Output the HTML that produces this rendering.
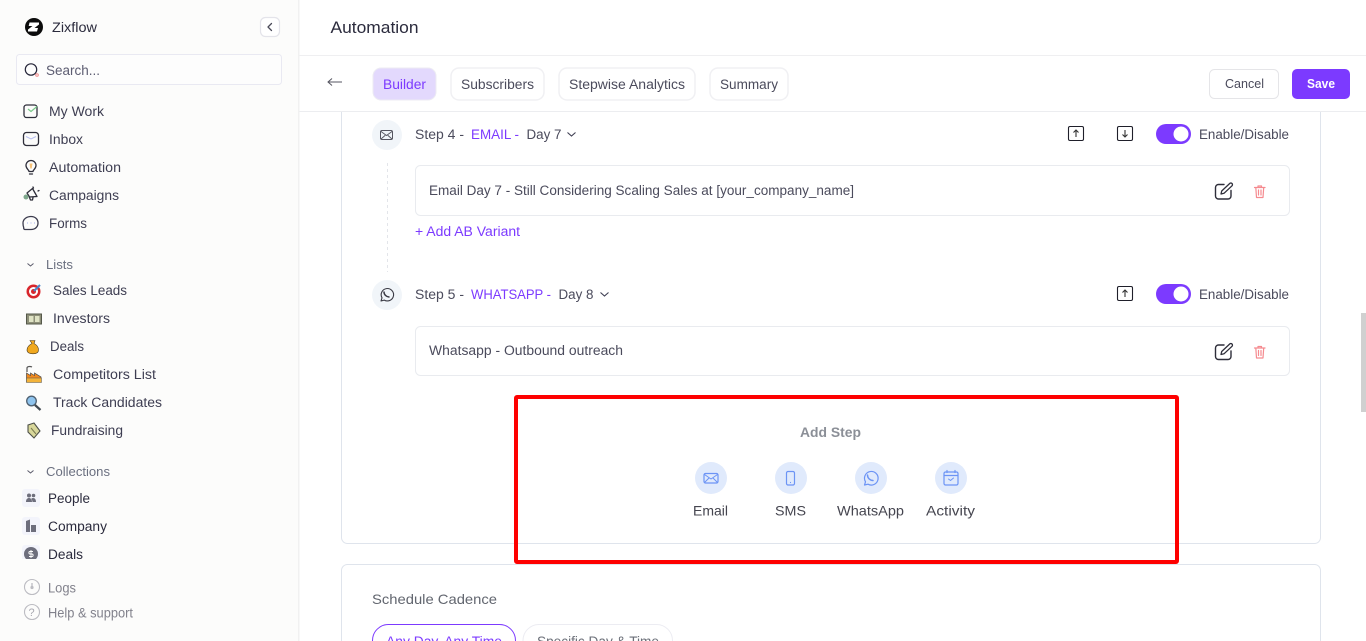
<!DOCTYPE html>
<html lang="en"><head><meta charset="utf-8"><title>Automation</title>
<style>
html,body{margin:0;padding:0;width:1366px;height:641px;overflow:hidden;background:#fff}
svg{display:block}
text{font-family:"Liberation Sans",sans-serif;font-size:13.5px;fill:#4b4b5c}
.n{fill:#3e3e52}.d{fill:#2b2b3d}.g{fill:#6b7080;font-size:12.5px}.p{fill:#7c3aff}
.ic{fill:none;stroke:#2e2e3a;stroke-width:1.3;stroke-linecap:round;stroke-linejoin:round}
.bl{fill:none;stroke:#6c94f5;stroke-width:1.2;stroke-linecap:round;stroke-linejoin:round}
.tr{fill:none;stroke:#f58a8f;stroke-width:1.2;stroke-linecap:round;stroke-linejoin:round}
</style></head><body>
<svg width="1366" height="641" viewBox="0 0 1366 641" xmlns="http://www.w3.org/2000/svg">
<defs><clipPath id="c"><rect x="0" y="480" width="298" height="79"/></clipPath></defs>
<rect width="1366" height="641" fill="#fff"/>
<!-- sidebar -->
<rect x="0" y="0" width="298" height="641" fill="#fcfcfb"/>
<rect x="298" y="0" width="1.5" height="641" fill="#f1f1f1"/>
<circle cx="34" cy="27" r="9" fill="#0c0c0c"/>
<path d="M29.500 22.500h9.500v2l-4.500 3.500h3.500l-1 3.500h-9v-2l4.500-3.500h-3.800z" fill="#fff"/>
<text x="52" y="32" class="d" textLength="45" lengthAdjust="spacingAndGlyphs">Zixflow</text>
<rect x="260.500" y="17.500" width="19" height="19" rx="5" fill="#fff" stroke="#e4e4ea" stroke-width="1.200"/>
<path d="M271.500 23.500l-3.500 3.500 3.500 3.500" fill="none" stroke="#4a4a58" stroke-width="1.300" stroke-linecap="round" stroke-linejoin="round"/>
<rect x="16.500" y="54.500" width="265" height="30" rx="3" fill="#fdfdfd" stroke="#e9e9f2"/>
<circle cx="31" cy="69.500" r="5.700" fill="none" stroke="#26263a" stroke-width="1.200"/>
<circle cx="37" cy="75" r="1.300" fill="none" stroke="#f08a8a"/>
<text x="46" y="75" style="fill:#5d5d72" textLength="54" lengthAdjust="spacingAndGlyphs">Search...</text>

<rect x="24" y="105" width="13" height="12.500" rx="2.500" class="ic"/>
<path d="M28 109l3 2.500 6-5" fill="none" stroke="#78c888" stroke-width="1.200"/>
<text x="49" y="116" class="n" textLength="55" lengthAdjust="spacingAndGlyphs">My Work</text>
<rect x="23.500" y="132.500" width="15" height="13" rx="3" class="ic"/>
<path d="M26 136.500l5 2.500 5-2.500" fill="none" stroke="#b8bff0" stroke-width="1"/>
<text x="49" y="144" class="n" textLength="34" lengthAdjust="spacingAndGlyphs">Inbox</text>
<path d="M29 171.500c0-2-3-2.500-3-6a5 5 0 0 1 10 0c0 3.500-3 4-3 6zM29.500 174h3" class="ic"/>
<path d="M29.500 163.500h3l-.8 5h-1.400z" fill="#f6c177"/>
<text x="49" y="172" class="n" textLength="72" lengthAdjust="spacingAndGlyphs">Automation</text>
<path d="M27 193l5.500-4.500 4.500 8-7.500.5zM29.500 197.500l1 2.500h2l.5-2.500M33 187l.5 1M38 191l1-.5" class="ic"/>
<circle cx="26" cy="197" r="2.500" fill="#7fa88c"/>
<text x="49" y="200" class="n" textLength="70" lengthAdjust="spacingAndGlyphs">Campaigns</text>
<path d="M31 216.500c4 0 7 2.500 7 6.500s-3 6.500-7 6.500h-6c-1 0-1.500-1-1.300-2-.4-1-.7-3-.7-4.500 0-4 4-6.500 8-6.500z" class="ic" style="stroke:#3b3b4d"/>
<path d="M27 223h1M30.500 223h1M34 223h1" stroke="#b8bff0" stroke-width="1.200"/>
<text x="49" y="228" class="n" textLength="38" lengthAdjust="spacingAndGlyphs">Forms</text>

<path d="M27.500 263.500l3 2.500 3-2.500" fill="none" stroke="#5a5a6a" stroke-width="1"/>
<text x="46" y="269" class="g" textLength="27" lengthAdjust="spacingAndGlyphs">Lists</text>
<circle cx="33.500" cy="291.500" r="7" fill="#d8262c"/><circle cx="33.500" cy="291.500" r="4.500" fill="#fff"/><circle cx="33.500" cy="291.500" r="2.500" fill="#d8262c"/>
<path d="M34 291l6-6" stroke="#4a86c8" stroke-width="2"/>
<text x="53" y="295" class="n" textLength="74" lengthAdjust="spacingAndGlyphs">Sales Leads</text>
<rect x="26.500" y="314" width="15" height="10" fill="#8d8f78" stroke="#55584a"/>
<rect x="29" y="316" width="4.500" height="6" fill="#dfe3c4"/><rect x="35" y="316" width="4.500" height="6" fill="#dfe3c4"/>
<text x="53" y="323" class="n" textLength="57" lengthAdjust="spacingAndGlyphs">Investors</text>
<path d="M30 340.500h5l-1 3c3 1.500 4.500 4 4.500 6.500 0 2.500-2 3.800-5.500 3.800s-6-1.300-6-3.800c0-2.500 2-5 5-6.500z" fill="#f0a81e" stroke="#4a3a20" stroke-width=".6"/>
<text x="50" y="351" class="n" textLength="34" lengthAdjust="spacingAndGlyphs">Deals</text>
<path d="M26.500 382v-9l4 2.500v-2.500l4 2.500v-2.500l6.500 4v5z" fill="#f28a1e" stroke="#4a4a4a" stroke-width=".7"/>
<path d="M27 372v-4c0-1.500 3-2 5-1" fill="none" stroke="#555" stroke-width="1.200"/>
<rect x="26.500" y="378" width="15" height="4.500" fill="#f3b33a" stroke="#555" stroke-width=".5"/>
<text x="53" y="379" class="n" textLength="103" lengthAdjust="spacingAndGlyphs">Competitors List</text>
<circle cx="31.500" cy="401" r="4.800" fill="#8fc4ee" stroke="#4f6070" stroke-width="1.300"/>
<path d="M35 405l5.500 5" stroke="#404850" stroke-width="2.200"/>
<text x="53" y="407" class="n" textLength="109" lengthAdjust="spacingAndGlyphs">Track Candidates</text>
<path d="M28 425l6-2 6 8-6 7-6-6z" fill="#d8d79a" stroke="#4d5048" stroke-width="1.100"/>
<path d="M31 428l5 6" stroke="#7a7c50"/>
<text x="51" y="435" class="n" textLength="72" lengthAdjust="spacingAndGlyphs">Fundraising</text>

<path d="M27.500 470.500l3 2.500 3-2.500" fill="none" stroke="#5a5a6a" stroke-width="1"/>
<text x="46" y="476" class="g" textLength="64" lengthAdjust="spacingAndGlyphs">Collections</text>
<g clip-path="url(#c)">
<rect x="22" y="489" width="18" height="18" rx="3" fill="#f3f4fb"/>
<circle cx="29" cy="495.500" r="2" fill="#6d6e7c"/><circle cx="33.500" cy="495.500" r="1.800" fill="#6d6e7c"/>
<path d="M26 502c0-3 1.500-4 3-4s3 1 3 4zM32.500 502h3.500c0-2.500-1-4-2.800-4-1 0-1.500.3-1.900.7.700 1 1.100 2 1.200 3.300z" fill="#6d6e7c"/>
<text x="48" y="503" class="d" textLength="42" lengthAdjust="spacingAndGlyphs">People</text>
<rect x="22" y="517" width="18" height="18" rx="3" fill="#f3f4fb"/>
<path d="M26 532v-11l4-1.500v12.500zM31 532v-7h5v7z" fill="#6d6e7c"/>
<text x="48" y="531" class="d" textLength="59" lengthAdjust="spacingAndGlyphs">Company</text>
<rect x="22" y="545" width="18" height="18" rx="3" fill="#f3f4fb"/>
<circle cx="31" cy="554" r="7" fill="#6d6e7c"/>
<path d="M33 551.500h-3c-1.500 0-1.500 2.500 0 2.500h2c1.500 0 1.500 2.500 0 2.500h-3M31 550v8" fill="none" stroke="#fff" stroke-width=".9"/>
<text x="48" y="559" class="d" textLength="35" lengthAdjust="spacingAndGlyphs">Deals</text>
</g>
<circle cx="32" cy="587" r="7.500" fill="none" stroke="#bcbcc2" stroke-width="1.100"/>
<path d="M32 583v4" stroke="#bcbcc2" stroke-width="1.300"/><circle cx="32" cy="587.500" r="1.600" fill="#bcbcc2"/>
<text x="48" y="592.500" style="fill:#82828c" textLength="28" lengthAdjust="spacingAndGlyphs">Logs</text>
<circle cx="32" cy="612" r="7.500" fill="none" stroke="#bcbcc2" stroke-width="1.100"/>
<text x="28.500" y="616" style="fill:#a8a8b0;font-size:11px">?</text>
<text x="48" y="617.500" style="fill:#82828c" textLength="85" lengthAdjust="spacingAndGlyphs">Help &amp; support</text>

<!-- cards -->
<rect x="341.500" y="100" width="979" height="443.500" rx="6" fill="#fff" stroke="#dfe4ec"/>
<rect x="341.500" y="564.500" width="979" height="100" rx="6" fill="#fff" stroke="#dfe4ec"/>
<!-- header -->
<rect x="299.500" y="0" width="1066.500" height="111" fill="#fff"/>
<rect x="299.500" y="55" width="1066.500" height="1" fill="#efeff1"/>
<rect x="299.500" y="111" width="1066.500" height="1" fill="#ecedf0"/>
<text x="330.500" y="33" class="d" style="font-size:16.500px" textLength="88" lengthAdjust="spacingAndGlyphs">Automation</text>
<path d="M342 82h-14M332 78.500l-4 3.500 4 3.500" fill="none" stroke="#555560" stroke-width="1"/>

<rect x="373" y="68" width="63" height="32" rx="8" fill="#e3d9fd" stroke="#ecebf3"/>
<text x="383" y="89" class="p" textLength="43" lengthAdjust="spacingAndGlyphs">Builder</text>
<rect x="451" y="68" width="93" height="32" rx="8" fill="#fff" stroke="#f0f0f3" stroke-width="1.500"/>
<text x="461" y="89" textLength="73" lengthAdjust="spacingAndGlyphs">Subscribers</text>
<rect x="559" y="68" width="136" height="32" rx="8" fill="#fff" stroke="#f0f0f3" stroke-width="1.500"/>
<text x="569" y="89" textLength="116" lengthAdjust="spacingAndGlyphs">Stepwise Analytics</text>
<rect x="710" y="68" width="78" height="32" rx="8" fill="#fff" stroke="#f0f0f3" stroke-width="1.500"/>
<text x="720" y="89" textLength="58" lengthAdjust="spacingAndGlyphs">Summary</text>
<rect x="1209.500" y="69.500" width="69" height="29" rx="5" fill="#fff" stroke="#e5e5e8"/>
<text x="1225" y="88" style="font-size:12.500px" textLength="39" lengthAdjust="spacingAndGlyphs">Cancel</text>
<rect x="1292" y="69" width="58" height="30" rx="5" fill="#7c3aff"/>
<text x="1307" y="88" style="font-size:12.500px;fill:#fff;font-weight:700" textLength="28" lengthAdjust="spacingAndGlyphs">Save</text>

<!-- step 4 -->
<circle cx="387" cy="135" r="15" fill="#f1f5f9"/>
<rect x="380.500" y="130.500" width="12" height="9" rx="1.500" class="ic" style="stroke-width:1;stroke:#55555f"/>
<path d="M381 131.500l5.500 4 5.500-4M381 139l4-3.500M392 139l-4-3.500" class="ic" style="stroke-width:.9;stroke:#55555f"/>
<text x="415" y="139" textLength="49" lengthAdjust="spacingAndGlyphs">Step 4 -</text>
<text x="471" y="139" class="p" textLength="48" lengthAdjust="spacingAndGlyphs">EMAIL -</text>
<text x="526.500" y="139" textLength="35" lengthAdjust="spacingAndGlyphs">Day 7</text>
<path d="M567.500 132.500l4 3.500 4-3.500" fill="none" stroke="#3e3e52" stroke-width="1.100"/>
<path d="M387.500 163v109" stroke="#e3e5ea" stroke-dasharray="3 3"/>
<rect x="415.500" y="165.500" width="874" height="50" rx="5" fill="#fff" stroke="#e9ebef"/>
<text x="429" y="195" textLength="425" lengthAdjust="spacingAndGlyphs">Email Day 7 - Still Considering Scaling Sales at [your_company_name]</text>
<text x="415" y="236" class="p" style="font-weight:500" textLength="105" lengthAdjust="spacingAndGlyphs">+ Add AB Variant</text>
<rect x="1068.500" y="126.500" width="15" height="14" rx="1.500" fill="none" stroke="#1f1f2a" stroke-width="1.100"/>
<path d="M1076 137v-6.500M1073.500 132.500l2.500-2.500 2.500 2.500" fill="none" stroke="#333" stroke-width="1.100"/>
<rect x="1117.500" y="126.500" width="15" height="14" rx="1.500" fill="none" stroke="#1f1f2a" stroke-width="1.100"/>
<path d="M1125 130v6.500M1122.500 134.500l2.500 2.500 2.500-2.500" fill="none" stroke="#333" stroke-width="1.100"/>
<rect x="1156" y="124" width="35" height="20" rx="10" fill="#7c3aff"/><circle cx="1181" cy="134" r="7.500" fill="#fff"/>
<text x="1199" y="139" textLength="90" lengthAdjust="spacingAndGlyphs">Enable/Disable</text>
<path d="M1224 184.500h-5.500a3 3 0 0 0-3 3v8.500a3 3 0 0 0 3 3h9.500a3 3 0 0 0 3-3v-5.500" class="ic" style="stroke-width:1.400"/>
<path d="M1221 194l.7-3 8-7.500a1.400 1.400 0 0 1 2.300 2.300l-8 7.500z" class="ic" style="stroke-width:1.300"/>
<path d="M1254.500 187.500h10.500M1258 187.500v-1.500h3.500v1.500M1255.800 187.500l.7 10h6.500l.7-10M1258.500 190v5M1261 190v5" class="tr"/>

<!-- step 5 -->
<circle cx="387" cy="295" r="15" fill="#f1f5f9"/>
<path d="M381 301l1-3.200a6.200 6.200 0 1 1 2.300 2.300z" class="ic" style="stroke-width:1.100;stroke:#3a3a44"/>
<path d="M384 292c0 2.600 2.200 4.800 5 5" class="ic" style="stroke-width:1.500;stroke:#3a3a44"/>
<text x="415" y="299" textLength="49" lengthAdjust="spacingAndGlyphs">Step 5 -</text>
<text x="471" y="299" class="p" textLength="80" lengthAdjust="spacingAndGlyphs">WHATSAPP -</text>
<text x="558.500" y="299" textLength="35" lengthAdjust="spacingAndGlyphs">Day 8</text>
<path d="M600.500 292.500l4 3.500 4-3.500" fill="none" stroke="#3e3e52" stroke-width="1.100"/>
<rect x="415.500" y="326.500" width="874" height="49" rx="5" fill="#fff" stroke="#e9ebef"/>
<text x="429" y="355" textLength="194" lengthAdjust="spacingAndGlyphs">Whatsapp - Outbound outreach</text>
<rect x="1117.500" y="286.500" width="15" height="14" rx="1.500" fill="none" stroke="#1f1f2a" stroke-width="1.100"/>
<path d="M1125 297v-6.500M1122.500 292.500l2.500-2.500 2.500 2.500" fill="none" stroke="#333" stroke-width="1.100"/>
<rect x="1156" y="284" width="35" height="20" rx="10" fill="#7c3aff"/><circle cx="1181" cy="294" r="7.500" fill="#fff"/>
<text x="1199" y="299" textLength="90" lengthAdjust="spacingAndGlyphs">Enable/Disable</text>
<g transform="translate(0,160.500)">
<path d="M1224 184.500h-5.500a3 3 0 0 0-3 3v8.500a3 3 0 0 0 3 3h9.500a3 3 0 0 0 3-3v-5.500" class="ic" style="stroke-width:1.400"/>
<path d="M1221 194l.7-3 8-7.500a1.400 1.400 0 0 1 2.300 2.300l-8 7.500z" class="ic" style="stroke-width:1.300"/>
<path d="M1254.500 187.500h10.500M1258 187.500v-1.500h3.500v1.500M1255.800 187.500l.7 10h6.500l.7-10M1258.500 190v5M1261 190v5" class="tr"/>
</g>

<!-- add step -->
<text x="800" y="437" style="font-weight:700;fill:#8b8f97;font-size:13.500px" textLength="61" lengthAdjust="spacingAndGlyphs">Add Step</text>
<circle cx="711" cy="478" r="16" fill="#e0eafc"/>
<rect x="704" y="473.500" width="14" height="9.500" rx="1.500" class="bl"/>
<path d="M704.500 474.500l6.500 4.500 6.500-4.500M704.500 482.500l4.500-4.500M717.500 482.500l-4.500-4.500" class="bl" style="stroke-width:1"/>
<circle cx="791" cy="478" r="16" fill="#e0eafc"/>
<rect x="786.500" y="471.500" width="8" height="13.500" rx="1.500" class="bl"/><circle cx="790.500" cy="482.500" r=".6" fill="#6c94f5"/>
<circle cx="871" cy="478" r="16" fill="#e0eafc"/>
<path d="M864.500 485l1-3.200a6.800 6.800 0 1 1 2.500 2.400z" class="bl"/>
<path d="M867.500 475c0 3 2.500 5.500 5.500 5.500" class="bl" style="stroke-width:1.500"/>
<circle cx="951" cy="478" r="16" fill="#e0eafc"/>
<rect x="944" y="472" width="14" height="13" rx="1.500" class="bl"/>
<path d="M944 475.500h14M947 470.500v2M955 470.500v2" class="bl"/>
<path d="M948.500 479l2 1.500 3-2.500" class="bl" style="stroke-width:1"/>
<text x="693" y="515.500" style="fill:#45454f;font-size:14px" textLength="35" lengthAdjust="spacingAndGlyphs">Email</text>
<text x="775" y="515.500" style="fill:#45454f;font-size:14px" textLength="31" lengthAdjust="spacingAndGlyphs">SMS</text>
<text x="837" y="515.500" style="fill:#45454f;font-size:14px" textLength="67" lengthAdjust="spacingAndGlyphs">WhatsApp</text>
<text x="926" y="515.500" style="fill:#45454f;font-size:14px" textLength="49" lengthAdjust="spacingAndGlyphs">Activity</text>

<!-- red box -->
<rect x="516" y="397" width="661" height="165" rx="1" fill="none" stroke="#fe0000" stroke-width="4"/>

<!-- schedule -->
<text x="372" y="604" style="fill:#62666f;font-size:14px" textLength="125" lengthAdjust="spacingAndGlyphs">Schedule Cadence</text>
<rect x="372.500" y="624.500" width="143" height="40" rx="16" fill="#fff" stroke="#7c3aff"/>
<text x="386" y="646" class="p" textLength="116" lengthAdjust="spacingAndGlyphs">Any Day, Any Time</text>
<rect x="523" y="624.500" width="149.500" height="40" rx="16" fill="#fff" stroke="#ececf2"/>
<text x="537" y="646" style="fill:#6b6f78" textLength="122" lengthAdjust="spacingAndGlyphs">Specific Day &amp; Time</text>
<!-- scrollbar -->
<rect x="1361" y="313" width="5" height="99" fill="#d0d0d0"/>
</svg>
</body></html>
